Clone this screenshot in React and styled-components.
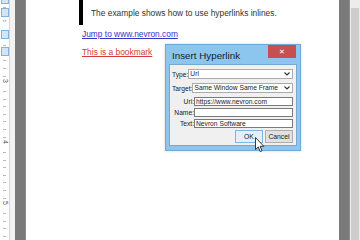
import React from 'react'
import styled, { createGlobalStyle } from 'styled-components'

const GlobalStyle = createGlobalStyle`
    html, body {
        margin: 0;
        padding: 0;
        overflow: hidden;
    }
    body {
        font-family: "Liberation Sans", Arial, sans-serif;
    }
`

const rulerNumbers = [
    { label: '3', top: 77 },
    { label: '4', top: 138 },
    { label: '5', top: 199 },
]

const rulerMarkers = [-5, 8, 30, 47]

function Ruler() {
    return (
        <RulerBar>
            {rulerMarkers.map(top => (
                <Marker key={top} style={{ top }} />
            ))}
            <Indent>‹›</Indent>
            {rulerNumbers.map(n => (
                <RulerNumber key={n.label} style={{ top: n.top }}>{n.label}</RulerNumber>
            ))}
        </RulerBar>
    )
}

function Chevron() {
    return (
        <svg width="6" height="4" viewBox="0 0 6 4">
            <path d="M0.5 0.5 L3 3 L5.5 0.5" fill="none" stroke="#333" strokeWidth="1.1" />
        </svg>
    )
}

function Combo({ value }) {
    return (
        <ComboBox>
            <span>{value}</span>
            <Chevron />
        </ComboBox>
    )
}

function Pointer() {
    return (
        <CursorWrap>
            <svg width="10" height="16" viewBox="0 0 10 16">
                <path
                    d="M0.5 0.5 L0.5 12.5 L3.3 9.9 L5.2 14.6 L7 13.8 L5.1 9.3 L8.8 9.3 Z"
                    fill="#fff"
                    stroke="#222"
                    strokeWidth="0.9"
                    strokeLinejoin="round"
                />
            </svg>
        </CursorWrap>
    )
}

function InsertDialog() {
    return (
        <Dialog>
            <TitleBar>
                <Title>Insert Hyperlink</Title>
                <CloseButton>✕</CloseButton>
            </TitleBar>
            <Client>
                <InlineRow gap={0}>
                    <Label>Type:</Label>
                    <Combo value="Url" />
                </InlineRow>
                <InlineRow gap={4}>
                    <Label>Target:</Label>
                    <Combo value="Same Window Same Frame" />
                </InlineRow>
                <FieldRow gap={4}>
                    <RightLabel>Url:</RightLabel>
                    <TextBox>https://www.nevron.com</TextBox>
                </FieldRow>
                <FieldRow gap={2}>
                    <RightLabel>Name:</RightLabel>
                    <TextBox />
                </FieldRow>
                <FieldRow gap={2}>
                    <RightLabel>Text:</RightLabel>
                    <TextBox>Nevron Software</TextBox>
                </FieldRow>
                <Buttons>
                    <DlgButton primary>OK</DlgButton>
                    <DlgButton>Cancel</DlgButton>
                </Buttons>
            </Client>
        </Dialog>
    )
}

export default function App() {
    return (
        <>
            <GlobalStyle />
            <Screen>
                <Ruler />
                <Gutter />
                <Shade />
                <Page>
                    <Quote>
                        <QuoteText>The example shows how to use hyperlinks inlines.</QuoteText>
                    </Quote>
                    <Link color="#3434c8">Jump to www.nevron.com</Link>
                    <Link color="#d33b3b">This is a bookmark</Link>
                    <InsertDialog />
                    <Pointer />
                </Page>
                <Shade />
                <ScrollTrack>
                    <Thumb />
                </ScrollTrack>
            </Screen>
        </>
    )
}

const Screen = styled.div`
    width: 360px;
    height: 240px;
    display: flex;
    overflow: hidden;
    background: #fff;
`

const RulerBar = styled.div`
    position: relative;
    width: 9px;
    flex-shrink: 0;
    background-color: #fff;
    border-right: 1px solid #d6d6d6;
    background-image: repeating-linear-gradient(
        to bottom,
        transparent 0px,
        transparent 6px,
        #b8b8b8 6px,
        #b8b8b8 7px,
        transparent 7px,
        transparent 7.625px
    );
    background-size: 3px 100%;
    background-position: 3px 1px;
    background-repeat: no-repeat;
`

const Marker = styled.div`
    position: absolute;
    left: 1px;
    width: 6px;
    height: 7px;
    background: #d3e6f7;
    border: 1px solid #7fb2de;
`

const Indent = styled.div`
    position: absolute;
    top: 17px;
    left: 0;
    width: 9px;
    text-align: center;
    font-size: 6px;
    line-height: 6px;
    color: #5a7fa6;
    background: #fff;
`

const RulerNumber = styled.div`
    position: absolute;
    left: 1px;
    width: 8px;
    height: 8px;
    background: #fff;
    font-size: 7px;
    line-height: 8px;
    text-align: center;
    color: #555;
    transform: rotate(90deg);
`

const Gutter = styled.div`
    width: 5px;
    flex-shrink: 0;
    background: #f3f3f3;
`

const Shade = styled.div`
    width: 11px;
    flex-shrink: 0;
    background: #7a7a7a;
    border-right: 1px solid #8c8c8c;
    box-sizing: border-box;
`

const Page = styled.div`
    position: relative;
    flex: 1;
    background: #fff;
    padding-left: 53px;
    display: flex;
    flex-direction: column;
    align-items: flex-start;
`

const Quote = styled.div`
    border-left: 4px solid #000;
    height: 25px;
    padding-left: 8px;
    display: flex;
    align-items: flex-end;
    margin-bottom: 4px;
`

const QuoteText = styled.div`
    font-size: 8.4px;
    line-height: 10px;
    color: #333;
    margin-bottom: 7px;
`

const Link = styled.a`
    font-size: 8.4px;
    line-height: 10px;
    color: ${p => p.color};
    text-decoration: underline;
    margin-left: 3px;
    margin-bottom: 8px;
    cursor: pointer;
`

const Dialog = styled.div`
    position: absolute;
    left: 139px;
    top: 44px;
    width: 136px;
    height: 107px;
    box-sizing: border-box;
    background: #8cc6ef;
    border: 1px solid #6fa9d6;
    display: flex;
    flex-direction: column;
    padding: 0 3px 4px 3px;
    box-shadow: 0 0 3px rgba(0, 0, 0, 0.15);
`

const TitleBar = styled.div`
    height: 19px;
    display: flex;
    align-items: flex-start;
    justify-content: space-between;
`

const Title = styled.div`
    font-size: 9.8px;
    color: #1b1b1b;
    padding-left: 3px;
    padding-top: 5px;
`

const CloseButton = styled.div`
    width: 28px;
    height: 13px;
    margin-right: 1px;
    background: #c74f4f;
    color: #fff;
    font-size: 7px;
    line-height: 13px;
    text-align: center;
`

const Client = styled.div`
    flex: 1;
    background: #f0f0f0;
    border: 1px solid #7aa7cc;
    display: flex;
    flex-direction: column;
    padding: 4px 3px 0 2px;
    font-size: 6.7px;
    color: #222;
`

const InlineRow = styled.div`
    display: flex;
    align-items: center;
    margin-top: ${p => p.gap}px;
`

const FieldRow = styled.div`
    display: grid;
    grid-template-columns: 22px 1fr;
    align-items: center;
    margin-top: ${p => p.gap}px;
`

const Label = styled.span`
    white-space: nowrap;
`

const RightLabel = styled.span`
    text-align: right;
`

const ComboBox = styled.div`
    flex: 1;
    height: 10px;
    box-sizing: border-box;
    background: #fff;
    border: 1px solid #a8abb3;
    display: flex;
    align-items: center;
    justify-content: space-between;
    padding: 0 2px 0 1px;
    line-height: 8px;
    overflow: hidden;
    white-space: nowrap;
`

const TextBox = styled.div`
    height: 9px;
    box-sizing: border-box;
    background: #fff;
    border: 1px solid #7a7a7a;
    padding-left: 1px;
    line-height: 7px;
    white-space: nowrap;
    overflow: hidden;
`

const Buttons = styled.div`
    display: flex;
    justify-content: flex-end;
    gap: 2px;
    margin-top: 2px;
`

const DlgButton = styled.div`
    width: 28px;
    height: 13px;
    box-sizing: border-box;
    background: ${p => (p.primary ? '#e3f0fb' : '#e1e1e1')};
    border: 1px solid ${p => (p.primary ? '#7eb4e2' : '#adadad')};
    font-size: 6.8px;
    line-height: 11px;
    text-align: center;
    color: #222;
`

const CursorWrap = styled.div`
    position: absolute;
    left: 229px;
    top: 137px;
    line-height: 0;
`

const ScrollTrack = styled.div`
    width: 10px;
    flex-shrink: 0;
    background: #ececec;
    padding: 8px 1px 0 1px;
    box-sizing: border-box;
    display: flex;
`

const Thumb = styled.div`
    flex: 1;
    background: #cdcdcd;
`
